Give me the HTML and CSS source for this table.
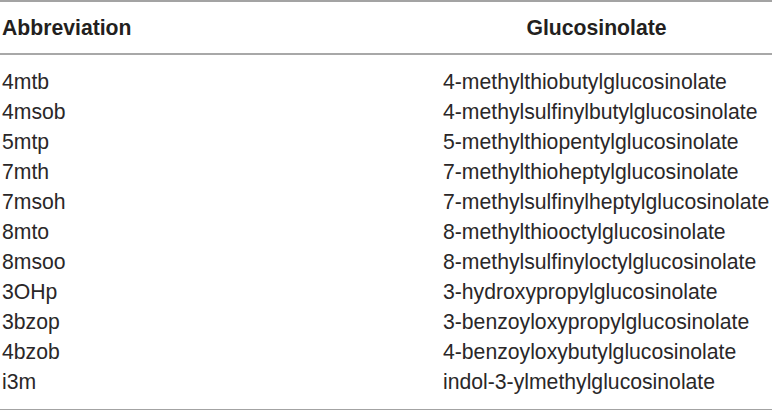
FILE: index.html
```html
<!DOCTYPE html>
<html>
<head>
<meta charset="utf-8">
<link rel="stylesheet" href="styles.css">
</head>
<body>
<table class="gsl">
  <thead>
    <tr><th class="c1">Abbreviation</th><th class="c2">Glucosinolate</th></tr>
  </thead>
  <tbody>
    <tr class="first"><td class="c1">4mtb</td><td class="c2">4-methylthiobutylglucosinolate</td></tr>
    <tr><td class="c1">4msob</td><td class="c2">4-methylsulfinylbutylglucosinolate</td></tr>
    <tr><td class="c1">5mtp</td><td class="c2">5-methylthiopentylglucosinolate</td></tr>
    <tr><td class="c1">7mth</td><td class="c2">7-methylthioheptylglucosinolate</td></tr>
    <tr><td class="c1">7msoh</td><td class="c2">7-methylsulfinylheptylglucosinolate</td></tr>
    <tr><td class="c1">8mto</td><td class="c2">8-methylthiooctylglucosinolate</td></tr>
    <tr><td class="c1">8msoo</td><td class="c2">8-methylsulfinyloctylglucosinolate</td></tr>
    <tr><td class="c1">3OHp</td><td class="c2">3-hydroxypropylglucosinolate</td></tr>
    <tr><td class="c1">3bzop</td><td class="c2">3-benzoyloxypropylglucosinolate</td></tr>
    <tr><td class="c1">4bzob</td><td class="c2">4-benzoyloxybutylglucosinolate</td></tr>
    <tr class="last"><td class="c1">i3m</td><td class="c2">indol-3-ylmethylglucosinolate</td></tr>
  </tbody>
</table>
</body>
</html>
```
FILE: styles.css
```css
html, body {
  margin: 0;
  padding: 0;
  background: #fff;
}
.gsl {
  width: 772px;
  border-collapse: collapse;
  border-top: 2px solid #a3a3a3;
  border-bottom: 2px solid #a3a3a3;
  font-family: "Liberation Sans", Arial, sans-serif;
  font-size: 21.2px;
  color: #2a2728;
}
.gsl th, .gsl td {
  padding: 0;
  white-space: nowrap;
}
.gsl thead tr {
  height: 53px;
  border-bottom: 2px solid #a8a8a8;
}
.gsl th {
  font-weight: bold;
  vertical-align: middle;
  padding-top: 1px;
  color: #231f20;
}
.gsl th.c1 {
  text-align: left;
  padding-left: 2px;
}
.gsl th.c2 {
  text-align: center;
  padding-right: 22px;
}
.gsl td {
  height: 30px;
  line-height: 30px;
  vertical-align: middle;
}
.gsl .c1 {
  width: 441px;
  padding-left: 2px;
  text-align: left;
}
.gsl td.c2 {
  text-align: left;
}
.gsl tr.first td {
  padding-top: 12px;
}
.gsl tr.last td {
  padding-bottom: 12px;
}
```
